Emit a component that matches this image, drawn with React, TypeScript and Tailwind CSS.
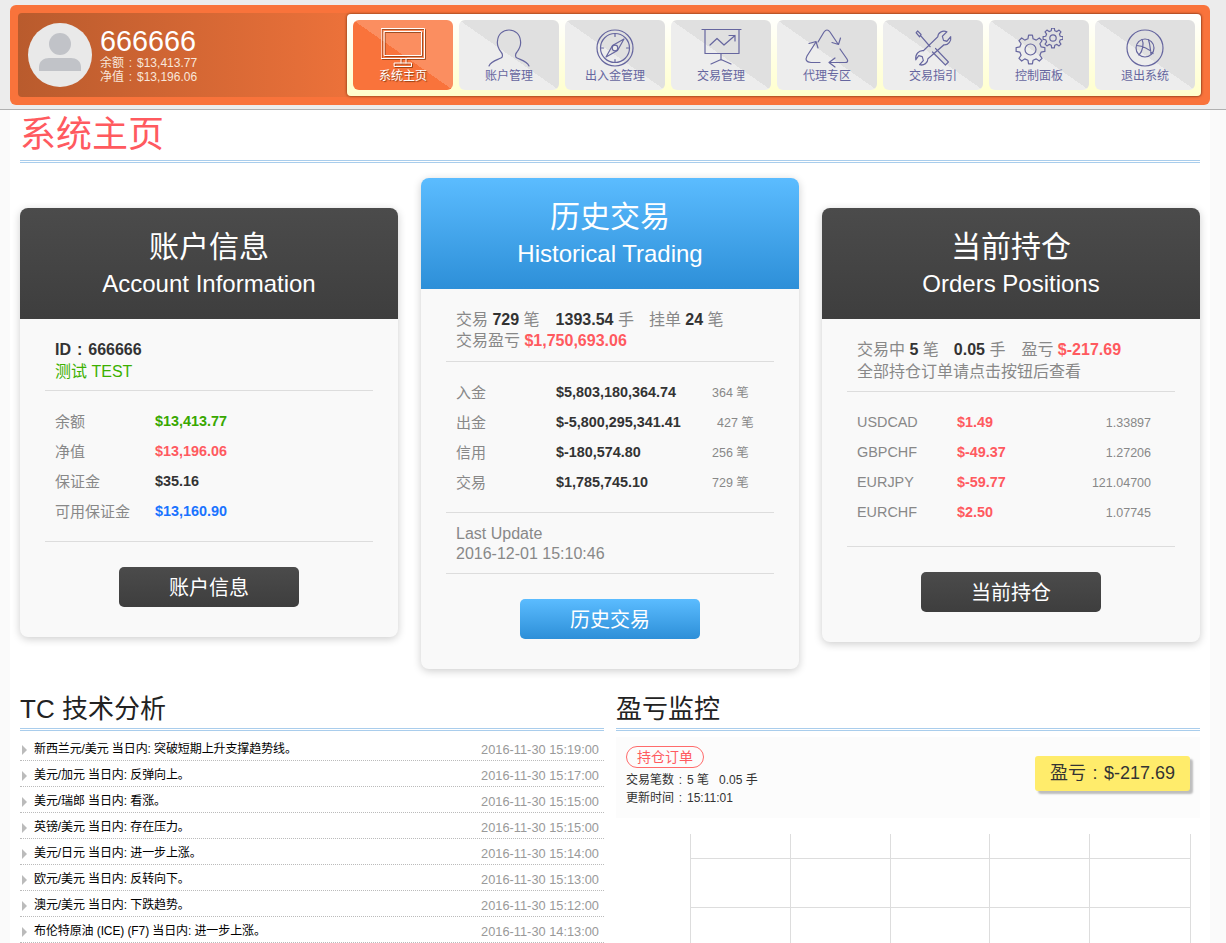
import type { ReactNode } from 'react';

const stroke = { fill: 'none', stroke: 'currentColor', strokeWidth: 1.2, strokeLinecap: 'round', strokeLinejoin: 'round' } as const;

function gearPath(cx: number, cy: number, outer: number, inner: number, teeth: number) {
  const pts: string[] = [];
  const step = (Math.PI * 2) / teeth;
  for (let i = 0; i < teeth; i++) {
    const a = i * step - Math.PI / 2;
    const list: [number, number][] = [
      [inner, a - step * 0.3],
      [outer, a - step * 0.17],
      [outer, a + step * 0.17],
      [inner, a + step * 0.3],
    ];
    list.forEach(([r, t]) => pts.push(`${(cx + r * Math.cos(t)).toFixed(2)} ${(cy + r * Math.sin(t)).toFixed(2)}`));
  }
  return `M${pts.join('L')}Z`;
}

function Icon({ name }: { name: string }) {
  return (
    <svg width="48" height="40" viewBox="0 0 48 40" {...stroke}>
      {name === 'home' && (
        <g className="drop-shadow-[1px_1px_0_rgba(120,50,10,0.7)]">
          <rect x="2.5" y="0.5" width="43" height="30" strokeWidth="1" />
          <rect x="5.5" y="3.5" width="37" height="24" strokeWidth="1" />
          <path d="M22 31v4M27 31v4" strokeWidth="1" />
          <rect x="15.5" y="35" width="17" height="3.5" strokeWidth="1" />
        </g>
      )}
      {name === 'user' && (
        <path d="M4 38C6 33 12 32 16 30C18 29 18 26 16 24C13 20 12 16 12.500 13C13 6 18 2 24 2C30 2 35 6 35.500 13C36 16 35 20 32 24C30 26 30 29 32 30C36 32 42 33 44 38" />
      )}
      {name === 'compass' && (
        <g>
          <circle cx="24" cy="20" r="18" />
          <circle cx="24" cy="20" r="14.500" />
          <path d="M24 5.500v3M24 31.500v3M9.500 20h3M35.500 20h3" />
          <path d="M33 11L26.500 22.500L15 29L21.500 17.500Z" />
          <circle cx="24" cy="20" r="2.800" fill="#ececec" />
        </g>
      )}
      {name === 'chart' && (
        <g>
          <path d="M5 1.500H44M8 1.500V25.500H42V1.500" />
          <path d="M13 17L20 10.500L27 17L38 7.500M32 7.500H38V13" />
          <path d="M24 26V32M14 36L24 31.500L34 36" />
        </g>
      )}
      {name === 'recycle' && (
        <g>
          <path d="M15 14L21 4Q24 0 27 4L35 16M29 14.500L35.500 16.500L37.500 10" />
          <path d="M13 14L4 28Q1 34 8 34.500L17 34.500M6 15.500L13 13.500L15 20" />
          <path d="M37 21L44 31Q46 34.500 42 34.500L26 34.500M32 30L26 34.500L32 39" />
        </g>
      )}
      {name === 'tools' && (
        <g transform="translate(6 2) scale(0.76 0.9)" strokeWidth="1.5">
          <path d="M42 2L36 7L37.500 11.500L42 12.500L47 7.500C48 12 44 17 38 16.500L17 32C17 36 12 40 6 38.500L11 34L9.500 29.500L5 28.500L1 33C0 27 5 22.500 11 23L30 7.500C30 3 36 0 42 2Z" />
          <path d="M1.500 3L3.500 1L8 5L6 7.500ZM7.500 6.500L20 18.500M27 20.500L44 35.500L40 39L23 24.500" />
        </g>
      )}
      {name === 'gears' && (
        <g>
          <path d={gearPath(15.5, 21.5, 14.500, 11, 8)} />
          <circle cx="15.5" cy="21.5" r="5.500" />
          <path d={gearPath(38, 10, 10, 7.500, 8)} />
          <circle cx="38" cy="10" r="3.200" />
        </g>
      )}
      {name === 'ball' && (
        <g>
          <circle cx="24" cy="20" r="18" />
          <circle cx="24" cy="20" r="9" />
          <path d="M15.500 17.500C21 18 28 21 32 25.500M21 11.500C23 15 22 23 18 27M27.500 11.800C29 16 29 19 30 26" />
        </g>
      )}
    </svg>
  );
}

const tabs = [
  { name: 'home', label: '系统主页' },
  { name: 'user', label: '账户管理' },
  { name: 'compass', label: '出入金管理' },
  { name: 'chart', label: '交易管理' },
  { name: 'recycle', label: '代理专区' },
  { name: 'tools', label: '交易指引' },
  { name: 'gears', label: '控制面板' },
  { name: 'ball', label: '退出系统' },
];

function Colon() {
  return <span className="mx-[1.5px]">:</span>;
}

function Header() {
  return (
    <div className="h-[110px] bg-[#ececec] border-b border-[#b0b0b0] pt-[5px] pl-[10px]">
      <div className="w-[1200px] h-[100px] bg-[#f9733b] rounded-md py-[8px] pl-[8px] pr-[8px]">
        <div className="h-[84px] flex items-center justify-between rounded-sm bg-[linear-gradient(to_right,#b95b2d,#f0733b_30%,#e5693a)]">
          <div className="flex items-center pl-[10px]">
            <div className="w-[64px] h-[64px] rounded-full bg-[#e9e9e9] overflow-hidden">
              <svg width="64" height="64" viewBox="0 0 64 64">
                <circle cx="32" cy="21" r="11" fill="#c1c3c8" />
                <path d="M11 48V44C11 38 16 35 21 35H43C48 35 53 38 53 44V48Z" fill="#c1c3c8" />
              </svg>
            </div>
            <div className="ml-[8px] text-white">
              <div className="text-[28.8px] leading-[30px]">666666</div>
              <div className="text-[12px] leading-[14px] text-[#f8e6da]">余额 <Colon /> $13,413.77</div>
              <div className="text-[12px] leading-[14px] text-[#f8e6da]">净值 <Colon /> $13,196.06</div>
            </div>
          </div>
          <div className="w-[854px] h-[82px] mr-[1px] flex gap-[6px] p-[6px] rounded-sm bg-[linear-gradient(to_bottom,#ffffff,#ffffcc)] shadow-[0_0_3px_rgba(90,35,0,0.9)]">
            {tabs.map((t, i) =>
              i === 0 ? (
                <div key={t.name} className="w-[100px] h-[70px] pt-[8px] flex flex-col items-center rounded-md text-white bg-[linear-gradient(to_top_right,#f9733b_50%,#fb8e60_50%)]">
                  <Icon name={t.name} />
                  <div className="text-[12px] leading-[14px] mt-[1px] [text-shadow:1px_1px_1px_rgba(120,50,10,0.8)]">{t.label}</div>
                </div>
              ) : (
                <div key={t.name} className="w-[100px] h-[70px] pt-[8px] flex flex-col items-center rounded-md text-[#66669f] bg-[linear-gradient(to_top_right,#ededed_50%,#e0e0e0_50%)]">
                  <Icon name={t.name} />
                  <div className="text-[12px] leading-[14px] mt-[1px]">{t.label}</div>
                </div>
              )
            )}
          </div>
        </div>
      </div>
    </div>
  );
}

function Card({ title, en, blue, button, className, children }: { title: string; en: string; blue?: boolean; button: string; className?: string; children: ReactNode }) {
  const grad = blue
    ? 'bg-[linear-gradient(to_bottom,#5bbcff,#2d8fd8)]'
    : 'bg-[linear-gradient(to_bottom,#4b4b4b,#3e3e3e)]';
  return (
    <div className={`w-[378px] rounded-lg bg-[#f9f9f9] shadow-[0_2px_9px_rgba(0,0,0,0.2)] overflow-hidden ${className ?? ''}`}>
      <div className={`h-[111px] pt-[19px] text-center text-white ${grad}`}>
        <div className="text-[30px] leading-[40px]">{title}</div>
        <div className="text-[24px] leading-[34px]">{en}</div>
      </div>
      <div className="px-[25px]">
        {children}
        <div className={`w-[180px] h-[40px] mx-auto mt-[25px] mb-[30px] rounded-[5px] text-white text-[20px] leading-[42px] text-center ${grad}`}>{button}</div>
      </div>
    </div>
  );
}

function Row({ label, value, color, extra, valueWidth }: { label: string; value: string; color: string; extra?: string; valueWidth?: string }) {
  return (
    <div className="h-[30px] flex items-center">
      <div className="w-[100px] text-[15px] text-[#888888]">{label}</div>
      <div className={`${valueWidth ?? ''} text-[14.4px] font-bold ${color}`}>{value}</div>
      {extra && <div className="text-[12.500px] text-[#888888]">{extra}</div>}
    </div>
  );
}

function Bold({ children }: { children: ReactNode }) {
  return <b className="text-[#333333]">{children}</b>;
}

function AccountCard() {
  return (
    <Card title="账户信息" en="Account Information" button="账户信息" className="mt-[30px]">
      <div className="pt-[20px] pb-[7px] pl-[10px] border-b border-[#dddddd] text-[16px] leading-[22px]">
        <div className="font-bold text-[#333333]">ID <Colon /> 666666</div>
        <div className="text-[#3cb000]">测试 TEST</div>
      </div>
      <div className="pt-[16px] pb-[14px] pl-[10px] border-b border-[#dddddd]">
        <Row label="余额" value="$13,413.77" color="text-[#38a800]" />
        <Row label="净值" value="$13,196.06" color="text-[#ff5a5f]" />
        <Row label="保证金" value="$35.16" color="text-[#333333]" />
        <Row label="可用保证金" value="$13,160.90" color="text-[#1a73ff]" />
      </div>
    </Card>
  );
}

function HistoryCard() {
  return (
    <Card title="历史交易" en="Historical Trading" button="历史交易" blue>
      <div className="pt-[20px] pb-[10px] pl-[10px] border-b border-[#dddddd] text-[16px] leading-[21px] text-[#888888]">
        <div>
          交易 <Bold>729</Bold> 笔<span className="ml-[16px]"><Bold>1393.54</Bold> 手</span><span className="ml-[15px]">挂单 <Bold>24</Bold> 笔</span>
        </div>
        <div>
          交易盈亏 <b className="text-[#ff5a5f]">$1,750,693.06</b>
        </div>
      </div>
      <div className="pt-[16px] pb-[14px] pl-[10px] border-b border-[#dddddd]">
        <Row label="入金" value="$5,803,180,364.74" color="text-[#333333]" extra="364 笔" valueWidth="w-[156px]" />
        <Row label="出金" value="$-5,800,295,341.41" color="text-[#333333]" extra="427 笔" valueWidth="w-[161px]" />
        <Row label="信用" value="$-180,574.80" color="text-[#333333]" extra="256 笔" valueWidth="w-[156px]" />
        <Row label="交易" value="$1,785,745.10" color="text-[#333333]" extra="729 笔" valueWidth="w-[156px]" />
      </div>
      <div className="pt-[11px] pb-[9px] pl-[10px] border-b border-[#dddddd] text-[16px] leading-[20px] text-[#888888]">
        <div>Last Update</div>
        <div>2016-12-01 15:10:46</div>
      </div>
    </Card>
  );
}

const positions = [
  { sym: 'USDCAD', pl: '$1.49', price: '1.33897' },
  { sym: 'GBPCHF', pl: '$-49.37', price: '1.27206' },
  { sym: 'EURJPY', pl: '$-59.77', price: '121.04700' },
  { sym: 'EURCHF', pl: '$2.50', price: '1.07745' },
];

function PositionsCard() {
  return (
    <Card title="当前持仓" en="Orders Positions" button="当前持仓" className="mt-[30px]">
      <div className="pt-[20px] pb-[8px] pl-[10px] border-b border-[#dddddd] text-[16px] leading-[22px] text-[#888888]">
        <div>
          交易中 <Bold>5</Bold> 笔<span className="ml-[15px]"><Bold>0.05</Bold> 手</span><span className="ml-[16px]">盈亏 <b className="text-[#ff5a5f]">$-217.69</b></span>
        </div>
        <div>全部持仓订单请点击按钮后查看</div>
      </div>
      <div className="pt-[16px] pb-[18px] pl-[10px] pr-[24px] border-b border-[#dddddd]">
        {positions.map((p) => (
          <div key={p.sym} className="h-[30px] flex items-center">
            <div className="w-[100px] text-[14.4px] text-[#888888]">{p.sym}</div>
            <div className="flex-1 text-[14.4px] font-bold text-[#ff5a5f]">{p.pl}</div>
            <div className="text-[12.500px] text-[#888888]">{p.price}</div>
          </div>
        ))}
      </div>
    </Card>
  );
}

const news = [
  { text: '新西兰元/美元 当日内: 突破短期上升支撑趋势线。', time: '2016-11-30 15:19:00' },
  { text: '美元/加元 当日内: 反弹向上。', time: '2016-11-30 15:17:00' },
  { text: '美元/瑞郎 当日内: 看涨。', time: '2016-11-30 15:15:00' },
  { text: '英镑/美元 当日内: 存在压力。', time: '2016-11-30 15:15:00' },
  { text: '美元/日元 当日内: 进一步上涨。', time: '2016-11-30 15:14:00' },
  { text: '欧元/美元 当日内: 反转向下。', time: '2016-11-30 15:13:00' },
  { text: '澳元/美元 当日内: 下跌趋势。', time: '2016-11-30 15:12:00' },
  { text: '布伦特原油 (ICE) (F7) 当日内: 进一步上涨。', time: '2016-11-30 14:13:00' },
];

function SectionTitle({ children }: { children: ReactNode }) {
  return (
    <div className="h-[42px] border-b-[3px] border-double border-[#a9cdec] text-[26px] leading-[41px] text-[#222222]">{children}</div>
  );
}

function NewsList() {
  return (
    <div className="w-[584px]">
      <SectionTitle>TC 技术分析</SectionTitle>
      <div className="mt-[4px]">
        {news.map((n) => (
          <div key={n.text + n.time} className="h-[26px] flex items-center border-b border-dotted border-[#bbbbbb] text-[12px]">
            <div className="w-0 h-0 mt-[5px] ml-[2px] mr-[7px] border-y-[5px] border-y-transparent border-l-[5px] border-l-[#bbbbbb]" />
            <div className="flex-1 mt-[2px] tracking-[-0.1px] text-black">{n.text}</div>
            <div className="mt-[5px] pr-[5px] text-[12.800px] text-[#999999]">{n.time}</div>
          </div>
        ))}
      </div>
    </div>
  );
}

function ProfitChart() {
  const xs = [0.5, 100.5, 200.5, 299.5, 399.5, 500.5];
  const ys = [24.5, 73.5];
  return (
    <svg width="501" height="110" className="block ml-[74px] mt-[16px]">
      {xs.map((x) => <line key={x} x1={x} x2={x} y1={0} y2={110} stroke="#dddddd" />)}
      {ys.map((y) => <line key={y} x1={0} x2={501} y1={y} y2={y} stroke="#dddddd" />)}
    </svg>
  );
}

function ProfitMonitor() {
  return (
    <div className="w-[584px]">
      <SectionTitle>盈亏监控</SectionTitle>
      <div className="mt-[6px] h-[81px] bg-[#fcfcfc] pt-[9px] px-[10px] flex justify-between items-start">
        <div>
          <div className="w-[78px] h-[22px] rounded-full border border-[#ff6b6b] text-center text-[14px] leading-[20px] text-[#ff5a5f]">持仓订单</div>
          <div className="mt-[3px] text-[12px] leading-[18px] text-[#333333]">交易笔数 <Colon /> 5 笔 &nbsp; 0.05 手</div>
          <div className="text-[12px] leading-[18px] text-[#333333]">更新时间 <Colon /> 15:11:01</div>
        </div>
        <div className="mt-[10px] w-[155px] h-[35px] rounded-[3px] bg-[#ffec6b] text-center text-[18px] leading-[35px] text-[#333333] shadow-[3px_3px_2px_rgba(0,0,0,0.25)]">盈亏 <Colon /> $-217.69</div>
      </div>
      <ProfitChart />
    </div>
  );
}

export default function App() {
  return (
    <div className="h-[943px] overflow-hidden bg-[#fafafa] font-['Liberation_Sans','Noto_Sans_CJK_SC',sans-serif]">
      <Header />
      <div className="w-[1200px] ml-[10px] px-[10px] bg-white h-[833px]">
        <div className="h-[53px] border-b-[3px] border-double border-[#a9cdec] text-[36px] leading-[50px] text-[#ff5a5f]">系统主页</div>
        <div className="mt-[15px] flex justify-between items-start">
          <AccountCard />
          <HistoryCard />
          <PositionsCard />
        </div>
        <div className="mt-[20px] flex justify-between items-start">
          <NewsList />
          <ProfitMonitor />
        </div>
      </div>
    </div>
  );
}
